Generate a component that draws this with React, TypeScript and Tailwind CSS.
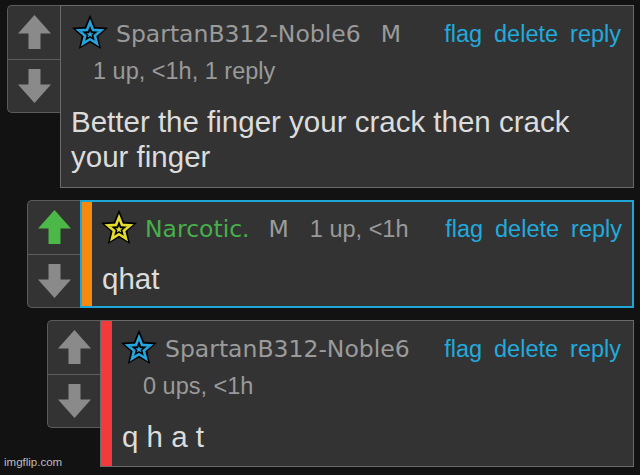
import React from "react";

const SANS = "font-['Liberation_Sans',Arial,sans-serif]";
const DEJAVU = "font-['DejaVu_Sans',Verdana,sans-serif]";

function starPoints(cx: number, cy: number, R: number, r: number) {
  return Array.from({ length: 10 }, (_, i) => {
    const a = -Math.PI / 2 + (i * Math.PI) / 5;
    const rad = i % 2 === 0 ? R : r;
    return `${(cx + rad * Math.cos(a)).toFixed(2)},${(cy + rad * Math.sin(a)).toFixed(2)}`;
  }).join(" ");
}

function Star({ color }: { color: string }) {
  return (
    <svg width="38" height="36" viewBox="0 0 100 95" className="shrink-0 -translate-y-[2px]">
      <polygon points={starPoints(50, 52, 50, 23)} fill="#000" />
      <polygon points={starPoints(50, 53, 31, 13.5)} fill="none" stroke={color} strokeWidth="7" />
      <polygon points={starPoints(50, 54, 10, 4.2)} fill={color} />
    </svg>
  );
}

function Arrow({ down, color }: { down?: boolean; color: string }) {
  return (
    <svg width="33" height="34" viewBox="0 0 33 34" className={down ? "rotate-180" : ""}>
      <polygon points="16.5,0 33,18.5 22.5,18.5 22.5,34 10.5,34 10.5,18.5 0,18.5" fill={color} />
    </svg>
  );
}

function VoteBox({ upColor = "#8a8a8a" }: { upColor?: string }) {
  return (
    <div className="flex h-[108px] w-[53px] shrink-0 flex-col rounded-l-[5px] border border-r-0 border-[#5c5c5c] bg-[#333]">
      <div className="flex flex-1 items-center justify-center border-b border-[#5c5c5c]">
        <Arrow color={upColor} />
      </div>
      <div className="flex flex-1 items-center justify-center">
        <Arrow down color="#8a8a8a" />
      </div>
    </div>
  );
}

function Actions() {
  return (
    <div className={`ml-auto flex gap-[12px] text-[23.5px] leading-[40px] text-[#22aadc] ${SANS}`}>
      <span>flag</span>
      <span>delete</span>
      <span>reply</span>
    </div>
  );
}

export default function App() {
  return (
    <div className="relative flex min-h-[475px] flex-col gap-[12px] bg-[#121212] pr-[6px] pt-[5px]">
      {/* first comment */}
      <div className="ml-[7px] flex items-start">
        <VoteBox />
        <div className="flex-1 border border-[#6a6a6a] bg-[#333] pt-[8px] pb-[13px]">
          <div className="flex h-[40px] items-center pl-[10px] pr-[12px]">
            <Star color="#27a3dc" />
            <span className={`ml-[7px] text-[23.5px] leading-[40px] text-[#9b9b9b] ${DEJAVU}`}>SpartanB312-Noble6</span>
            <span className={`ml-[20px] text-[23.5px] leading-[40px] text-[#9b9b9b] ${DEJAVU}`}>M</span>
            <Actions />
          </div>
          <div className={`pl-[32px] text-[23.5px] leading-[34px] text-[#9a9a9a] ${SANS}`}>1 up, &lt;1h, 1 reply</div>
          <div className={`mt-[16px] pl-[10px] pr-[12px] text-[29.5px] leading-[35px] text-[#dcdcdc] ${SANS}`}>
            Better the finger your crack then crack your finger
          </div>
        </div>
      </div>

      {/* reply, highlighted */}
      <div className="ml-[27px] flex items-start">
        <VoteBox upColor="#4cb848" />
        <div className="flex flex-1 border-2 border-[#1fa6d8] bg-[#333]">
          <div className="w-[10px] shrink-0 bg-[#f7890c]" />
          <div className="flex-1 pt-[7px] pb-[10px]">
            <div className="flex h-[40px] items-center pl-[8px] pr-[10px]">
              <Star color="#e4dc2c" />
              <span className={`ml-[7px] text-[23.5px] leading-[40px] text-[#46b04a] ${DEJAVU}`}>Narcotic.</span>
              <span className={`ml-[19px] text-[23.5px] leading-[40px] text-[#9b9b9b] ${DEJAVU}`}>M</span>
              <span className={`ml-[21px] text-[23.5px] leading-[40px] text-[#9a9a9a] ${SANS}`}>1 up, &lt;1h</span>
              <Actions />
            </div>
            <div className={`mt-[12px] pl-[10px] text-[29.5px] leading-[35px] text-[#dcdcdc] ${SANS}`}>qhat</div>
          </div>
        </div>
      </div>

      {/* nested reply */}
      <div className="ml-[47px] flex items-start">
        <VoteBox />
        <div className="flex flex-1 border border-[#6a6a6a] bg-[#333]">
          <div className="w-[11px] shrink-0 bg-[#f23a3a]" />
          <div className="flex-1 pt-[8px] pb-[12px]">
            <div className="flex h-[40px] items-center pl-[8px] pr-[12px]">
              <Star color="#27a3dc" />
              <span className={`ml-[7px] text-[23.5px] leading-[40px] text-[#9b9b9b] ${DEJAVU}`}>SpartanB312-Noble6</span>
              <Actions />
            </div>
            <div className={`pl-[31px] text-[23.5px] leading-[34px] text-[#9a9a9a] ${SANS}`}>0 ups, &lt;1h</div>
            <div className={`mt-[16px] pl-[10px] text-[29.5px] leading-[35px] text-[#dcdcdc] ${SANS}`}>q h a t</div>
          </div>
        </div>
      </div>

      <span className={`absolute bottom-[4px] left-[4px] text-[11.5px] text-[#bdbdbd] ${SANS}`}>imgflip.com</span>
    </div>
  );
}
